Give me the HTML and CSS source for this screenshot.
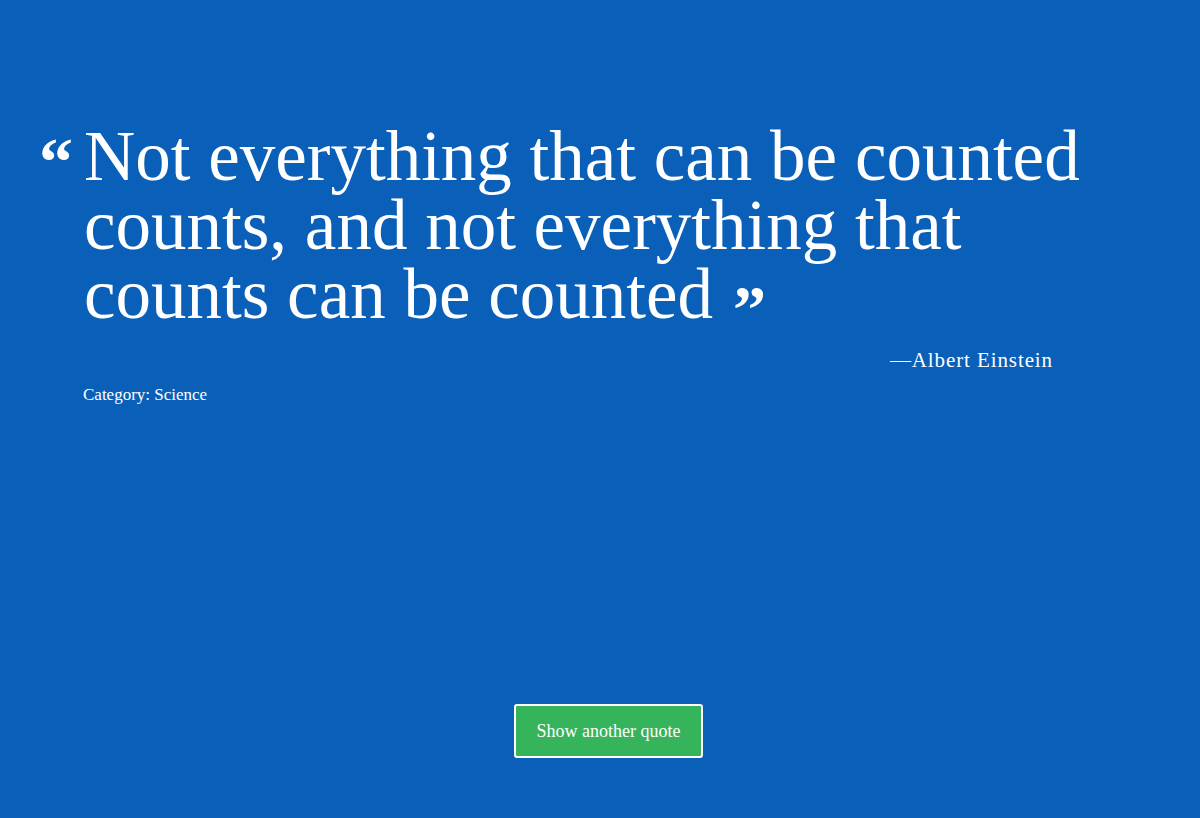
FILE: index.html
```html
<!DOCTYPE html>
<html>
<head>
<meta charset="utf-8">
<link rel="stylesheet" href="styles.css">
</head>
<body>
<main class="page">
  <section class="quote-box">
    <div class="quote-row">
      <span class="mark-open">&#8220;</span>
      <blockquote class="quote-text">Not everything that can be counted counts, and not everything that counts can be counted<span class="mark-close">&#8221;</span></blockquote>
    </div>
    <p class="author">&mdash;Albert Einstein</p>
    <p class="category">Category: Science</p>
  </section>
  <div class="actions">
    <button class="btn">Show another quote</button>
  </div>
</main>
</body>
</html>
```
FILE: styles.css
```css
html, body {
  margin: 0;
  padding: 0;
}
body {
  background: #0a5fb8;
  color: #ffffff;
  font-family: "Liberation Serif", "DejaVu Serif", serif;
  width: 1200px;
  height: 818px;
  overflow: hidden;
}
.page {
  display: flex;
  flex-direction: column;
  height: 818px;
  box-sizing: border-box;
  padding-top: 122px;
}
.quote-box {
  padding-left: 36px;
}
.quote-row {
  display: flex;
  align-items: flex-start;
}
.mark-open {
  width: 48px;
  flex: none;
  font-size: 68px;
  font-weight: bold;
  line-height: 1;
  padding-top: 6px;
  padding-left: 3px;
  box-sizing: border-box;
}
.quote-text {
  margin: 0;
  width: 1030px;
  font-size: 71px;
  line-height: 69px;
}
.mark-close {
  font-size: 66px;
  font-weight: bold;
  margin-left: 20px;
  vertical-align: -0.2em;
  line-height: 0;
}
.author {
  margin: 19px 0 0;
  width: 1017px;
  text-align: right;
  font-size: 21px;
  letter-spacing: 0.9px;
}
.category {
  margin: 12px 0 0 47px;
  font-size: 17px;
}
.actions {
  margin-top: auto;
  margin-bottom: 60px;
  padding-left: 514px;
}
.btn {
  width: 189px;
  height: 54px;
  background: #36b45b;
  color: #ffffff;
  border: 2px solid #ffffff;
  border-radius: 3px;
  font-family: "Liberation Serif", "DejaVu Serif", serif;
  font-size: 18px;
  cursor: pointer;
}
```
